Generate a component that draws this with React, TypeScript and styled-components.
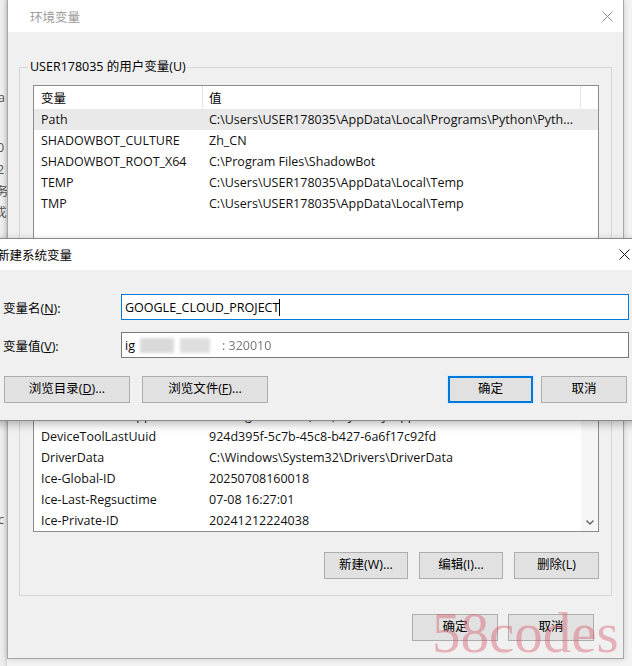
import React from "react";
import styled, { createGlobalStyle } from "styled-components";

const FONT = `"Open Sans", "Noto Sans CJK SC", sans-serif`;

const GlobalStyle = createGlobalStyle`
  html, body { margin: 0; padding: 0; }
  body { background: #f3f3f3; font-family: ${FONT}; }
  * { box-sizing: border-box; }
`;

const Page = styled.div`
  position: relative;
  width: 632px;
  height: 666px;
  overflow: hidden;
  display: flex;
  align-items: flex-start;
  background: #f3f3f3;
  font-family: ${FONT};
  font-size: 12.5px;
  color: #000;
`;

/* ---------- window behind (left strip) ---------- */
const BehindStrip = styled.div`
  width: 7px;
  height: 666px;
  flex: none;
  overflow: hidden;
  display: flex;
  flex-direction: column;
  background: linear-gradient(to right, #efefef 0, #ebebeb 4px, #d6d6d6 7px);
`;

const Fragment = styled.span<{ $gap: number; $shift: number }>`
  display: block;
  height: 22px;
  line-height: 22px;
  margin-top: ${(p) => p.$gap}px;
  margin-left: ${(p) => p.$shift}px;
  color: #555;
  white-space: nowrap;
`;

/* ---------- main window ---------- */
const Window = styled.div`
  width: 617px;
  height: 659px;
  flex: none;
  display: flex;
  flex-direction: column;
  background: #f0f0f0;
  border: 1px solid #a8a8a8;
  border-top: none;
  box-shadow: 0 0 6px rgba(0, 0, 0, 0.16);
`;

const TitleBar = styled.div<{ $active?: boolean; $padLeft: number; $height: number }>`
  height: ${(p) => p.$height}px;
  flex: none;
  display: flex;
  align-items: center;
  justify-content: space-between;
  padding: 0 10px 0 ${(p) => p.$padLeft}px;
  background: #fff;
  color: ${(p) => (p.$active ? "#000" : "#9a9a9a")};
`;

const Body = styled.div`
  flex: 1;
  display: flex;
  flex-direction: column;
  padding: 0 11px 0 11px;
`;

const Group = styled.fieldset<{ $top: number }>`
  margin: ${(p) => p.$top}px 0 0 0;
  min-width: 0;
  padding: 9px 12px 16px 13px;
  border: 1px solid #d6d6d6;
  display: flex;
  flex-direction: column;
`;

const Legend = styled.legend`
  padding: 0 2px;
  margin-left: -5px;
  line-height: 18px;
  height: 18px;
  white-space: nowrap;
`;

const ListBox = styled.div<{ $height: number }>`
  height: ${(p) => p.$height}px;
  flex: none;
  display: flex;
  background: #fff;
  border: 1px solid #8c8c8c;
  overflow: hidden;
`;

const ListMain = styled.div`
  flex: 1;
  display: flex;
  flex-direction: column;
`;

const HeaderRow = styled.div`
  display: grid;
  grid-template-columns: 169px 378px;
  height: 23px;
  flex: none;
`;

const HeaderCell = styled.div<{ $pad: number }>`
  display: flex;
  align-items: center;
  padding-left: ${(p) => p.$pad}px;
  border-right: 1px solid #e5e5e5;
  white-space: nowrap;
`;

const DataRow = styled.div<{ $selected?: boolean }>`
  display: grid;
  grid-template-columns: 169px 378px;
  height: 21px;
  flex: none;
  align-items: center;
  background: ${(p) => (p.$selected ? "#e9e9e9" : "transparent")};
  white-space: nowrap;
`;

const Cell = styled.div<{ $pad: number }>`
  padding-left: ${(p) => p.$pad}px;
  overflow: hidden;
  color: #111;
`;

const ScrollTrack = styled.div`
  width: 17px;
  flex: none;
  display: flex;
  flex-direction: column;
  justify-content: flex-end;
  background: #f6f6f6;
`;

const ScrollArrow = styled.div`
  height: 17px;
  display: flex;
  align-items: center;
  justify-content: center;
`;

const ButtonRow = styled.div<{ $top: number; $right?: number; $gap?: number }>`
  display: flex;
  justify-content: flex-end;
  gap: ${(p) => p.$gap ?? 11}px;
  margin-top: ${(p) => p.$top}px;
  padding-right: ${(p) => p.$right ?? 0}px;
`;

const Button = styled.button<{ $w: number; $default?: boolean }>`
  width: ${(p) => p.$w}px;
  height: 27px;
  flex: none;
  padding: 0;
  font: inherit;
  color: #000;
  background: #e1e1e1;
  border: ${(p) => (p.$default ? "2px solid #0078d7" : "1px solid #adadad")};
  box-shadow: ${(p) => (p.$default ? "0 0 0 2px #e2effa" : "none")};
  line-height: 1;
  white-space: nowrap;
  cursor: default;
`;

/* ---------- new system variable dialog ---------- */
const Dialog = styled.div`
  position: absolute;
  left: -12px;
  top: 238px;
  width: 653px;
  height: 183px;
  display: flex;
  flex-direction: column;
  background: #f0f0f0;
  border: 1px solid #8a8a8a;
  box-shadow: 0 3px 9px rgba(0, 0, 0, 0.28);
`;

const DialogBody = styled.div`
  display: flex;
  flex-direction: column;
  padding: 24px 11px 0 14px;
`;

const FormGrid = styled.div`
  display: grid;
  grid-template-columns: 118px 1fr;
  row-gap: 12px;
  align-items: center;
`;

const Label = styled.label`
  white-space: nowrap;
`;

const Field = styled.div<{ $focused?: boolean }>`
  height: 26px;
  display: flex;
  align-items: center;
  padding-left: 3px;
  background: #fff;
  border: 1px solid ${(p) => (p.$focused ? "#0078d7" : "#7a7a7a")};
  white-space: nowrap;
`;

const Caret = styled.span`
  display: inline-block;
  width: 1px;
  height: 17px;
  background: #000;
`;

const Smudge = styled.span<{ $w: number; $ml: number; $c: string }>`
  display: inline-block;
  width: ${(p) => p.$w}px;
  height: 15px;
  margin-left: ${(p) => p.$ml}px;
  background: ${(p) => p.$c};
  filter: blur(1.5px);
`;

const BlurText = styled.span`
  margin-left: 12px;
  color: #777;
  filter: blur(0.7px);
`;

const DialogButtons = styled.div`
  display: flex;
  align-items: center;
  margin-top: 18px;
  padding: 0 2px 0 1px;
  gap: 12px;
`;

const Spacer = styled.div`
  flex: 1;
`;

const PairGap = styled.div`
  display: flex;
  gap: 8px;
`;

const Watermark = styled.div`
  position: absolute;
  left: 432px;
  top: 604px;
  font-family: "Liberation Serif", serif;
  font-size: 57px;
  line-height: 1;
  color: rgba(214, 88, 104, 0.42);
  pointer-events: none;
  white-space: nowrap;
`;

const CloseIcon = ({ color }: { color: string }) => (
  <svg width="11" height="11" viewBox="0 0 11 11">
    <path d="M0.5 0.5 L10.5 10.5 M10.5 0.5 L0.5 10.5" stroke={color} strokeWidth="1" fill="none" />
  </svg>
);

type Row = [string, string];

const userVars: Row[] = [
  ["Path", "C:\\Users\\USER178035\\AppData\\Local\\Programs\\Python\\Pyth..."],
  ["SHADOWBOT_CULTURE", "Zh_CN"],
  ["SHADOWBOT_ROOT_X64", "C:\\Program Files\\ShadowBot"],
  ["TEMP", "C:\\Users\\USER178035\\AppData\\Local\\Temp"],
  ["TMP", "C:\\Users\\USER178035\\AppData\\Local\\Temp"],
];

const sysVars: Row[] = [
  ["DeviceToolLastApp", "C:\\Program Files (x86)\\Pythony\\App"],
  ["DeviceToolLastUuid", "924d395f-5c7b-45c8-b427-6a6f17c92fd"],
  ["DriverData", "C:\\Windows\\System32\\Drivers\\DriverData"],
  ["Ice-Global-ID", "20250708160018"],
  ["Ice-Last-Regsuctime", "07-08 16:27:01"],
  ["Ice-Private-ID", "20241212224038"],
];

const ListView = ({
  rows,
  height,
  selected,
  scroll,
}: {
  rows: Row[];
  height: number;
  selected?: number;
  scroll?: boolean;
}) => (
  <ListBox $height={height}>
    <ListMain>
      <HeaderRow>
        <HeaderCell $pad={7}>变量</HeaderCell>
        <HeaderCell $pad={6}>值</HeaderCell>
      </HeaderRow>
      {rows.map((r, i) => (
        <DataRow key={i} $selected={i === selected}>
          <Cell $pad={7}>{r[0]}</Cell>
          <Cell $pad={6}>{r[1]}</Cell>
        </DataRow>
      ))}
    </ListMain>
    {scroll && (
      <ScrollTrack>
        <ScrollArrow>
          <svg width="8" height="5" viewBox="0 0 8 5">
            <path d="M0.5 0.5 L4 4 L7.5 0.5" stroke="#606060" strokeWidth="1.3" fill="none" />
          </svg>
        </ScrollArrow>
      </ScrollTrack>
    )}
  </ListBox>
);

export default function App() {
  return (
    <Page>
      <GlobalStyle />
      <BehindStrip>
        <Fragment $gap={87} $shift={-2}>a</Fragment>
        <Fragment $gap={28} $shift={-3}>0</Fragment>
        <Fragment $gap={0} $shift={-3}>2</Fragment>
        <Fragment $gap={0} $shift={-4}>务</Fragment>
        <Fragment $gap={-1} $shift={-6}>戓</Fragment>
        <Fragment $gap={285} $shift={-2}>c</Fragment>
      </BehindStrip>

      <Window>
        <TitleBar $padLeft={22} $height={32}>
          <span>环境变量</span>
          <CloseIcon color="#8c8c8c" />
        </TitleBar>
        <Body>
          <Group $top={26}>
            <Legend>USER178035 的用户变量(U)</Legend>
            <ListView rows={userVars} height={193} selected={0} />
            <ButtonRow $top={20}>
              <Button $w={84}>新建(N)...</Button>
              <Button $w={84}>编辑(E)...</Button>
              <Button $w={84}>删除(D)</Button>
            </ButtonRow>
          </Group>
          <Group $top={12}>
            <Legend>系统变量(S)</Legend>
            <ListView rows={sysVars} height={151} scroll />
            <ButtonRow $top={20}>
              <Button $w={84}>新建(W)...</Button>
              <Button $w={84}>编辑(I)...</Button>
              <Button $w={85}>删除(L)</Button>
            </ButtonRow>
          </Group>
          <ButtonRow $top={18} $right={18} $gap={10}>
            <Button $w={86}>确定</Button>
            <Button $w={86}>取消</Button>
          </ButtonRow>
        </Body>
      </Window>

      <Dialog>
        <TitleBar $active $padLeft={8} $height={31}>
          <span>新建系统变量</span>
          <CloseIcon color="#111" />
        </TitleBar>
        <DialogBody>
          <FormGrid>
            <Label>
              变量名(<u>N</u>):
            </Label>
            <Field $focused>
              GOOGLE_CLOUD_PROJECT
              <Caret />
            </Field>
            <Label>
              变量值(<u>V</u>):
            </Label>
            <Field>
              ig
              <Smudge $w={34} $ml={5} $c="#d9d9d9" />
              <Smudge $w={30} $ml={6} $c="#dedede" />
              <BlurText>: 320010</BlurText>
            </Field>
          </FormGrid>
          <DialogButtons>
            <Button $w={126}>
              浏览目录(<u>D</u>)...
            </Button>
            <Button $w={126}>
              浏览文件(<u>F</u>)...
            </Button>
            <Spacer />
            <PairGap>
              <Button $w={85} $default>
                确定
              </Button>
              <Button $w={86}>取消</Button>
            </PairGap>
          </DialogButtons>
        </DialogBody>
      </Dialog>

      <Watermark>58codes</Watermark>
    </Page>
  );
}
